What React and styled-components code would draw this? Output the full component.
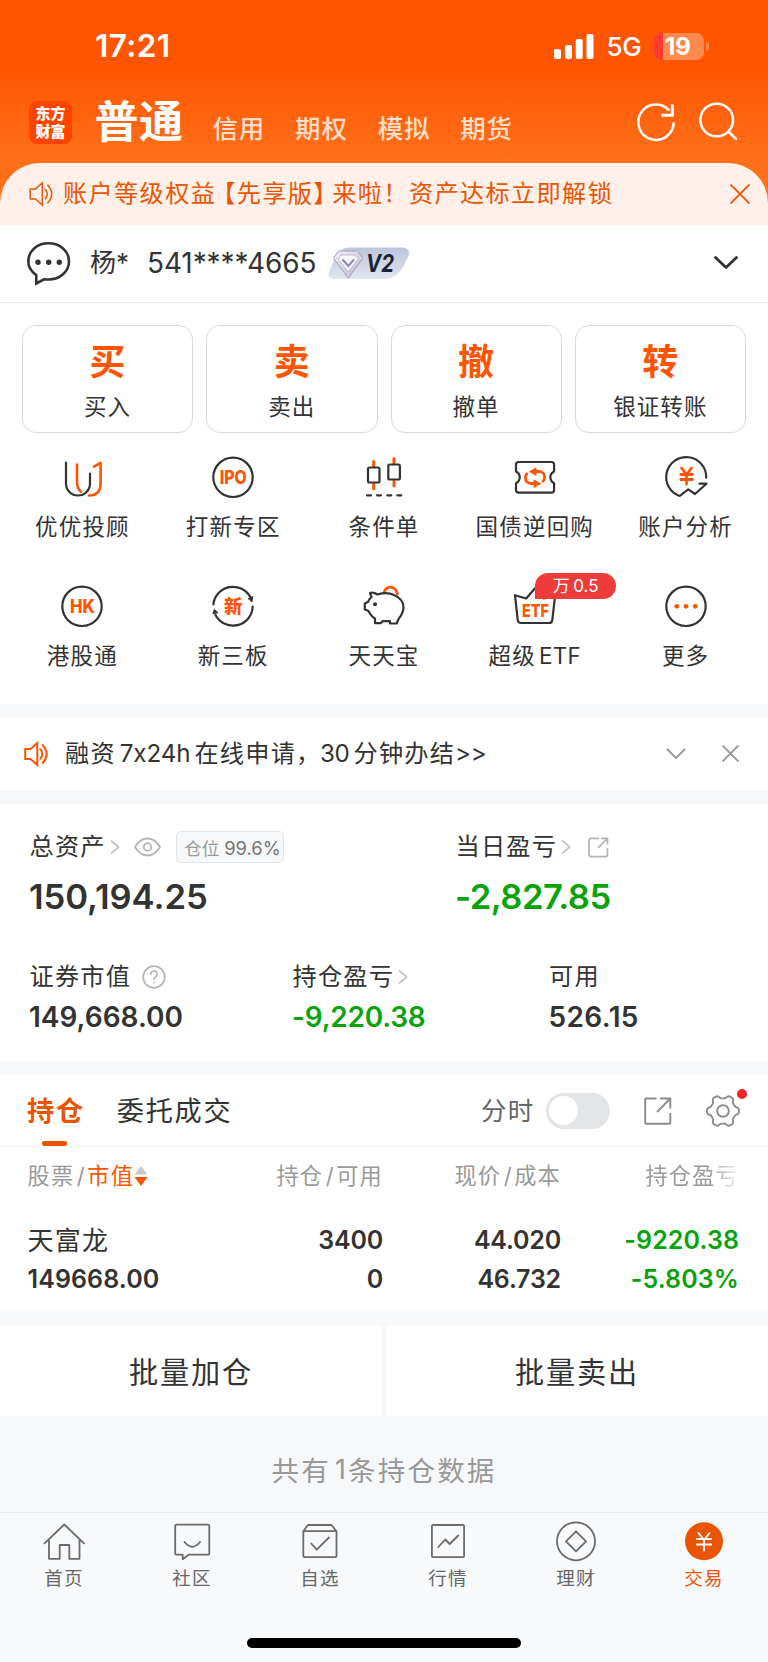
import React from "react";
import styled, { createGlobalStyle } from "styled-components";

const ORANGE = "#ff5500";
const DEEP = "#ea5504";
const INK = "#333";
const GREEN = "#0aa30a";
const FONT = 'Inter, "Noto Sans CJK SC", sans-serif';

const Global = createGlobalStyle`
  * { box-sizing: border-box; }
  body { margin: 0; background: #f7f8fa; font-family: ${FONT}; color: ${INK}; }
  svg { display: block; flex: none; }
`;

const Page = styled.div`
  width: 768px;
  height: 1662px;
  display: flex;
  flex-direction: column;
  overflow: hidden;
  white-space: nowrap;
  background: #f7f8fa;
`;

/* ---------- header ---------- */
const Hero = styled.header`
  flex: none;
  background: linear-gradient(#ff5500 0, #ff5500 66px, #ff7019 160px, #ff7019 100%);
`;
const StatusBar = styled.div`
  height: 92px;
  padding: 0 59px 0 95px;
  display: flex;
  align-items: center;
  color: #fff;
`;
const Clock = styled.div`
  flex: 1;
  font-size: 31.5px;
  font-weight: 600;
  line-height: 40px;
  letter-spacing: 0.4px;
`;
const Network = styled.div`
  margin: 2px 12px 0 13px;
  width: 35.5px;
  font-size: 26px;
  font-weight: 500;
  line-height: 30px;
  letter-spacing: -0.3px;
`;
const Battery = styled.div`
  width: 50px;
  height: 27px;
  border-radius: 8px;
  padding-left: 11px;
  font-size: 24px;
  line-height: 27px;
  font-weight: 700;
  background: linear-gradient(90deg, #ff3b30 9.5px, #ff8a4f 9.5px);
`;
const BatteryTip = styled.div`
  margin-left: 2px;
  width: 3px;
  height: 9px;
  border-radius: 0 4px 4px 0;
  background: #ff8a4f;
`;
const NavBar = styled.div`
  height: 71px;
  padding: 0 29px 0 29px;
  display: flex;
  align-items: flex-start;
`;
const Logo = styled.div`
  margin-top: 9px;
  width: 43px;
  height: 43px;
  border-radius: 8px;
  padding-top: 3.5px;
  background: #ff4400;
  color: #fff;
  font-size: 15px;
  font-weight: 900;
  line-height: 18px;
  text-align: center;
`;
const NavActive = styled.div`
  margin-left: 22.5px;
  width: 118px;
  font-size: 44px;
  font-weight: 700;
  line-height: 60px;
  letter-spacing: 0.6px;
  color: #fff;
`;
const NavItem = styled.div`
  width: 82.6px;
  font-size: 25.5px;
  font-weight: 500;
  line-height: 30px;
  padding-top: 21.5px;
  letter-spacing: 0.8px;
  color: #ffddcc;
`;
const NavIcons = styled.div`
  margin-left: auto;
  padding-top: 8px;
  display: flex;
  gap: 17.5px;
`;
const Promo = styled.div`
  height: 61.5px;
  padding: 0 18px 0 29px;
  display: flex;
  align-items: center;
  border-radius: 40px 40px 0 0;
  background: #fff0e9;
  color: ${DEEP};
`;
const PromoText = styled.div`
  flex: 1;
  margin-left: 9px;
  font-size: 24.2px;
  line-height: 30px;
  letter-spacing: 1.35px;
`;
const Bracket = styled.span`
  font-feature-settings: "halt";
  margin-left: ${(p) => (p.$open ? "7px" : "0")};
  margin-right: ${(p) => (p.$open ? "0" : "5.5px")};
`;

/* ---------- account ---------- */
const AccountRow = styled.div`
  flex: none;
  height: 78.5px;
  padding: 0 30px 0 26px;
  display: flex;
  align-items: center;
  background: #fff;
  border-bottom: 1.5px solid #eee;
`;
const AccountName = styled.div`
  margin-left: 18px;
  width: 57px;
  font-size: 26px;
  line-height: 32px;
`;
const AccountNumber = styled.div`
  width: 180.5px;
  font-size: 28px;
  line-height: 32px;
  letter-spacing: -0.1px;
`;
const LevelBadge = styled.div`
  margin-right: auto;
`;

/* ---------- shortcuts ---------- */
const Shortcuts = styled.section`
  flex: none;
  height: 400.5px;
  padding-top: 21.5px;
  background: #fff;
`;
const CardRow = styled.div`
  padding: 0 22px;
  display: grid;
  grid-template-columns: repeat(4, 1fr);
  gap: 13px;
`;
const ActionCard = styled.div`
  height: 108px;
  display: flex;
  flex-direction: column;
  align-items: center;
  border: 1px solid #dadada;
  border-radius: 14px;
`;
const ActionGlyph = styled.div`
  margin-top: 13.5px;
  font-size: 36px;
  line-height: 46px;
  font-weight: 700;
  color: ${ORANGE};
`;
const ActionLabel = styled.div`
  margin-top: 5.5px;
  font-size: 22.5px;
  line-height: 32px;
  letter-spacing: 1.1px;
`;
const ToolGrid = styled.div`
  padding: 20.5px 7px 0;
  display: grid;
  grid-template-columns: repeat(5, 1fr);
  grid-auto-rows: 129.3px;
`;
const Tool = styled.div`
  position: relative;
  display: flex;
  flex-direction: column;
  align-items: center;
`;
const ToolLabel = styled.div`
  margin-top: 10px;
  font-size: 22.5px;
  line-height: 32px;
  letter-spacing: 1.2px;
`;
const RateTag = styled.div`
  position: absolute;
  left: 76px;
  top: -9.5px;
  width: 80.5px;
  height: 26.5px;
  border-radius: 14px 14px 14px 0;
  background: #ee3b3b;
  color: #fff;
  font-size: 17px;
  line-height: 27.5px;
  letter-spacing: 0.4px;
  text-align: center;
`;
const Latin = styled.span`
  margin-left: ${(p) => p.$l || 0}px;
  margin-right: ${(p) => p.$r || 0}px;
  letter-spacing: ${(p) => p.$ls || 0}px;
`;

/* ---------- financing notice ---------- */
const Notice = styled.div`
  flex: none;
  margin-top: 14px;
  height: 72.5px;
  padding: 0 29.5px 0 23.5px;
  display: flex;
  align-items: center;
  gap: 36px;
  background: #fff;
`;
const NoticeText = styled.div`
  flex: 1;
  margin-left: -19.5px;
  font-size: 24.2px;
  line-height: 32px;
  letter-spacing: 1.2px;
`;

/* ---------- assets ---------- */
const Assets = styled.section`
  flex: none;
  margin-top: 14px;
  height: 257px;
  padding: 27px 30px 0 29.5px;
  background: #fff;
`;
const TotalsRow = styled.div`
  display: grid;
  grid-template-columns: 426px 1fr;
  height: 129.5px;
`;
const DetailRow = styled.div`
  display: grid;
  grid-template-columns: 263px 256.5px 1fr;
`;
const MetricLabel = styled.div`
  height: 32px;
  display: flex;
  align-items: center;
  font-size: 24.2px;
  line-height: 32px;
  letter-spacing: 1.2px;
`;
const Figure = styled.div`
  margin-left: -0.5px;
  margin-top: ${(p) => (p.$large ? 13 : 4)}px;
  font-size: ${(p) => (p.$large ? 34.6 : 28)}px;
  line-height: 40px;
  font-weight: 600;
  letter-spacing: ${(p) => p.$ls || 0}px;
  color: ${(p) => (p.$loss ? GREEN : INK)};
`;
const PositionTag = styled.div`
  margin-left: 15.5px;
  width: 108px;
  height: 32px;
  padding-left: 7px;
  border: 1px solid #e3e4e6;
  border-radius: 5px;
  background: #f7f8fa;
  font-size: 17.5px;
  line-height: 32px;
  letter-spacing: 0;
  color: #999;
`;
const TagValue = styled.span`
  margin-left: 5px;
  font-size: 18.4px;
  color: #777;
`;
const IconSlot = styled.span`
  margin-left: ${(p) => p.$gap}px;
  line-height: 0;
`;

/* ---------- holdings ---------- */
const Holdings = styled.section`
  flex: none;
  margin-top: 14px;
  height: 236px;
  background: #fff;
`;
const TabRow = styled.div`
  height: 72px;
  padding: 0 28px 0 27px;
  display: flex;
  align-items: center;
  border-bottom: 1px solid #f0f1f3;
`;
const Tab = styled.div`
  position: relative;
  height: 71px;
  line-height: 73px;
  margin-right: 32px;
  font-size: 27.2px;
  letter-spacing: 1.7px;
  font-weight: ${(p) => (p.$active ? 600 : 400)};
  color: ${(p) => (p.$active ? DEEP : INK)};
`;
const TabMark = styled.span`
  position: absolute;
  left: 15px;
  bottom: 0;
  width: 25px;
  height: 5px;
  border-radius: 2px;
  background: ${DEEP};
`;
const SwitchLabel = styled.div`
  margin-left: auto;
  font-size: 25.5px;
  line-height: 33px;
  letter-spacing: 1.2px;
  color: #666;
`;
const Toggle = styled.div`
  margin-left: 11px;
  width: 64.5px;
  height: 36px;
  padding: 3.5px;
  border-radius: 18px;
  background: #e3e4e6;
`;
const Knob = styled.div`
  width: 29px;
  height: 29px;
  border-radius: 50%;
  background: #fff;
`;
const GearWrap = styled.div`
  position: relative;
  margin-left: 34px;
`;
const RedDot = styled.div`
  position: absolute;
  right: -7px;
  top: -5px;
  width: 10.5px;
  height: 10.5px;
  border-radius: 50%;
  background: #f62424;
`;
const TableRow = styled.div`
  padding: 0 29px 0 27.5px;
  display: grid;
  grid-template-columns: 160px 195.5px 178px 1fr;
`;
const HeadRow = styled(TableRow)`
  margin-top: 12px;
  height: 33px;
  font-size: 22.2px;
  line-height: 32px;
  letter-spacing: 1.2px;
  color: #999;
`;
const HeadCell = styled.div`
  display: flex;
  align-items: center;
  justify-content: ${(p) => (p.$right ? "flex-end" : "flex-start")};
  mask-image: ${(p) =>
    p.$fade ? "linear-gradient(270deg, rgba(0,0,0,.1), #000 30px)" : "none"};
`;
const SortKey = styled.span`
  color: ${ORANGE};
`;
const BodyRow = styled(TableRow)`
  margin-top: 28.5px;
`;
const BodyCell = styled.div`
  text-align: ${(p) => (p.$right ? "right" : "left")};
  font-size: 25px;
  line-height: 39px;
  font-weight: 600;
  letter-spacing: ${(p) => (p.$right && !p.$loss ? -0.2 : 0.1)}px;
  color: ${(p) => (p.$loss ? GREEN : INK)};
`;
const StockName = styled.div`
  font-size: 26px;
  font-weight: 400;
  letter-spacing: 1.2px;
`;

/* ---------- batch actions & footer ---------- */
const BatchRow = styled.div`
  flex: none;
  margin-top: 15px;
  height: 90px;
  display: grid;
  grid-template-columns: 1fr 1fr;
  gap: 4px;
`;
const BatchButton = styled.div`
  height: 90px;
  padding-top: 2.5px;
  background: #fff;
  text-align: center;
  font-size: 29.2px;
  line-height: 87.5px;
  letter-spacing: 1.8px;
`;
const Summary = styled.div`
  flex: 1;
  display: flex;
  align-items: center;
  justify-content: center;
  padding-top: 10px;
  font-size: 27.5px;
  letter-spacing: 2.2px;
  color: #999;
`;
const TabBar = styled.nav`
  flex: none;
  height: 150px;
  border-top: 1.5px solid #ebebed;
  background: #f8f9fb;
  display: grid;
  grid-template-columns: repeat(6, 1fr);
  grid-template-rows: 125px 1fr;
`;
const TabItem = styled.div`
  padding-top: 6px;
  display: flex;
  flex-direction: column;
  align-items: center;
  font-size: 18.5px;
  line-height: 26px;
  letter-spacing: 1.2px;
  color: ${(p) => (p.$active ? DEEP : "#666")};
  svg { margin-bottom: 2px; }
`;
const HomeIndicator = styled.div`
  grid-column: 1 / -1;
  justify-self: center;
  width: 274px;
  height: 9.5px;
  border-radius: 5px;
  background: #000;
`;

/* ---------- icons ---------- */
const Svg = ({ w, h = w, sw = 2, c = INK, children }) => (
  <svg width={w} height={h} viewBox={`0 0 ${w} ${h}`} fill="none" stroke={c} strokeWidth={sw} strokeLinecap="round" strokeLinejoin="round">
    {children}
  </svg>
);
const Word = ({ x = 24.3, y, size, len, children }) => (
  <text x={x} y={y} fontSize={size} fontWeight="800" fontFamily={FONT} fill={ORANGE} stroke="none" textAnchor="middle" textLength={len} lengthAdjust="spacingAndGlyphs">
    {children}
  </text>
);
const Speaker = ({ c, sw }) => (
  <Svg w={25} h={26} c={c} sw={sw}>
    <path strokeLinecap="butt" strokeLinejoin="miter" d="M1.2 8H6.5L13.3 2V24L6.5 18H1.2Z" />
    <path d="M16.3 8.2q4 4.8 0 9.6M18.7 4.2q8 8.8 0 17.8" />
  </Svg>
);
const Cross = ({ s, c, sw }) => (
  <Svg w={s} c={c} sw={sw}>
    <path strokeLinecap="butt" d={`M.5 .5L${s - 0.5} ${s - 0.5}M${s - 0.5} .5L.5 ${s - 0.5}`} />
  </Svg>
);
const Right = () => (
  <Svg w={10} h={16} c="#c4c4c4" sw={1.7}><path strokeLinecap="butt" d="M1 1.5L8.6 8L1 14.5" /></Svg>
);

const tools = [
  ["优优投顾", <><path d="M8 9.5V30.5a12 12 0 0 0 24 0V20.5" /><path stroke={ORANGE} strokeWidth="2.6" d="M19 11.5V29c0 5 1.5 7.5 4 9.7M36 13.7L42.6 9.8V30c0 8-4 12.5-11.5 12.5" /></>],
  ["打新专区", <><circle cx="24" cy="24.3" r="19.7" /><Word y={30.8} size={18.5} len={27}>IPO</Word></>],
  ["条件单", <><path stroke={ORANGE} strokeWidth="3" d="M13.7 8.5V13M13.7 31V35.7M34 5.5V10M34 28V32.7" /><rect x="8" y="14.5" width="11.5" height="15" rx="1.5" /><rect x="28.3" y="11.5" width="11.6" height="15" rx="1.5" /><path d="M7 42.3h4M17 42.3h4M27.3 42.3h4M37.3 42.3h4" /></>],
  ["国债逆回购", <><path d="M7.5 9H40.5a2.6 2.6 0 0 1 2.6 2.6V18.5c-5 2.5-5 9 0 11.8V37a2.6 2.6 0 0 1-2.6 2.6H7.5A2.6 2.6 0 0 1 5 37V30.3c5-2.8 5-9.3 0-11.8V11.6A2.6 2.6 0 0 1 7.5 9Z" /><path stroke={ORANGE} strokeWidth="2.8" d="M24 18.5h4c3.5 0 5.6 2.6 5.6 5.5 0 2-.6 3.3-1.6 4.3M24 30.5h-4c-3.5 0-5.6-2.6-5.6-5.5 0-2 .6-3.5 1.5-4.2" /><path fill={ORANGE} stroke={ORANGE} strokeWidth="1" d="M18.8 18.5L25 15V22ZM29.2 30.5L23 27V34Z" /></>],
  ["账户分析", <><path d="M44.2 24.7A20 20 0 1 0 17.7 43L26.3 36.3L33 41L44.5 30.7H37.5" /><path stroke={ORANGE} strokeWidth="2.8" d="M19.5 15L24.5 21.5L29.5 15M24.5 21.5V31M18.8 21.5H30.5M18.8 26.5H30.5" /></>],
  ["港股通", <><circle cx="24" cy="24.3" r="19.7" /><Word x={24.5} y={30.8} size={18.5} len={25}>HK</Word></>],
  ["新三板", <><path d="M4.4 22.3A19.7 19.7 0 0 1 41.5 15.5M43.7 24.5A19.7 19.7 0 0 1 6.5 33" /><path fill={INK} strokeWidth="1" d="M39.5 16.5L43.8 14.5L43 19.5ZM4 31.5L5.3 27.5L8.8 30.5Z" /><Word y={31} size={18.5}>新</Word></>],
  ["天天宝", <><path stroke={ORANGE} strokeWidth="2.8" d="M24 10.5C26.5 3.2 35 3.2 37.5 12" /><path fill="#fff" d="M10 11C13 10 15.5 11.2 17.5 12.5C23 10.8 30 11 34 13C40 15.5 43.5 20 43.5 25.5C43.5 31 40.5 34.5 38.3 37.5L36.7 41.5H30V39.2H22.5L21 41.2H15V36.5C12 35 10.5 33 8.5 29L4.8 27.5V21.5L8 20C8.6 17.8 9.8 16.5 11.5 15Z" /><circle cx="15" cy="22.3" r="2" fill={INK} stroke="none" /></>],
  ["超级", <><path d="M4 13.2L15.2 16.5L23.8 6.5L32.8 16.5L44.2 13.2L41.3 38Q41 41 38 41H10Q7 41 6.7 38Z" /><Word x={24.5} y={34.8} size={18} len={27}>ETF</Word></>],
  ["更多", <><circle cx="24" cy="24.3" r="19.7" /><g fill={ORANGE} stroke="none"><circle cx="14.8" cy="24.3" r="2.4" /><circle cx="24" cy="24.3" r="2.4" /><circle cx="33.3" cy="24.3" r="2.4" /></g></>],
];

const tabs = [
  ["首页", <path d="M2.5 24.3L22.3 5.5L42 24.3M7 21V39.8H17.7V26H27.3V39.8H37.5V21" />],
  ["社区", <><path d="M6.5 5.7H38a1.3 1.3 0 0 1 1.3 1.3V34.4a1.3 1.3 0 0 1-1.3 1.3H18.7L12.7 40.3V35.7H6.5a1.3 1.3 0 0 1-1.3-1.3V7a1.3 1.3 0 0 1 1.3-1.3Z" /><path d="M14.5 23q7.8 9.5 15.5 0" /></>],
  ["自选", <path d="M5.3 12.2L10 6H33.5L38.5 12.2V36.5Q38.5 38.2 37 38.2H7Q5.3 38.2 5.3 36.5ZM5.3 12.2H38.5M13.3 24.5L18.7 30.7L31 18.5" />],
  ["行情", <><rect x="5.9" y="6" width="32.2" height="32.2" rx="1.3" /><path d="M12.3 28L19.3 20.5L23.7 25L32.3 16.5" /></>],
  ["理财", <><circle cx="22" cy="22.3" r="19" /><path d="M22 12.3L32 22.3L22 32.3L12 22.3Z" /></>],
  ["交易", <><circle cx="22" cy="22.3" r="19" fill={DEEP} stroke="none" /><path stroke="#fff" d="M16.5 14L22 21L27.5 14M22 21V31.5M14.8 20H29.2M14.8 25.5H29.2" /></>],
];

const cards = [["买", "买入"], ["卖", "卖出"], ["撤", "撤单"], ["转", "银证转账"]];

const gearPoints = () => {
  const pts = [];
  for (let i = 0; i <= 120; i += 1) {
    const a = (i / 120) * Math.PI * 2;
    const r = 14.3 - 1.7 * Math.tanh(2 * Math.cos(6 * a)) / Math.tanh(2);
    pts.push(`${(17 + r * Math.sin(a + Math.PI)).toFixed(2)} ${(17 + r * Math.cos(a + Math.PI)).toFixed(2)}`);
  }
  return `M${pts.join("L")}Z`;
};

export default function App() {
  return (
    <Page>
      <Global />
      <Hero>
        <StatusBar>
          <Clock>17:21</Clock>
          <svg width="40" height="25" fill="#fff">
            <rect x="0" y="15" width="7" height="10" rx="2" />
            <rect x="11" y="11" width="7" height="14" rx="2" />
            <rect x="21.7" y="5" width="7" height="20" rx="2" />
            <rect x="32.5" y="0" width="7" height="25" rx="2" />
          </svg>
          <Network>5G</Network>
          <Battery>19</Battery>
          <BatteryTip />
        </StatusBar>
        <NavBar>
          <Logo><div>东方</div><div>财富</div></Logo>
          <NavActive>普通</NavActive>
          {["信用", "期权", "模拟", "期货"].map((t) => <NavItem key={t}>{t}</NavItem>)}
          <NavIcons>
            <Svg w={44} c="#fff" sw={2.5}>
              <path strokeLinecap="butt" d="M39.7 22.3A17.7 17.7 0 1 1 35.3 10.5" />
              <path strokeLinecap="butt" strokeLinejoin="miter" strokeWidth="3" d="M38.3 4.5V15.3H27.5" />
            </Svg>
            <Svg w={44} c="#fff" sw={2.5}><circle cx="21.7" cy="20" r="16.3" /><path d="M33.3 31.5L41 39" /></Svg>
          </NavIcons>
        </NavBar>
        <Promo>
          <Speaker c={DEEP} sw={1.5} />
          <PromoText>
            账户等级权益<Bracket $open>【</Bracket>先享版<Bracket>】</Bracket>来啦！资产达标立即解锁
          </PromoText>
          <Cross s={20} c={DEEP} sw={1.8} />
        </Promo>
      </Hero>

      <AccountRow>
        <Svg w={46} h={46} sw={2.6}>
          <path strokeLinejoin="miter" d="M10.3 43.5V35.2C5 31.5 2.3 26.5 2.3 21.3C2.3 11 11 3.3 22.5 3.3S43 11 43 21.3S34 39.5 22.5 39.5Q20.5 39.5 18.5 39.2Z" />
          <g fill={INK} stroke="none"><circle cx="12" cy="22.3" r="2.7" /><circle cx="22.7" cy="22.3" r="2.7" /><circle cx="33.3" cy="22.3" r="2.7" /></g>
        </Svg>
        <AccountName>杨*</AccountName>
        <AccountNumber>541****4665</AccountNumber>
        <LevelBadge>
          <svg width="82" height="33" viewBox="0 0 82 33">
            <defs>
              <linearGradient id="plate" x1="0" y1="0" x2="0" y2="1"><stop offset="0" stopColor="#bcc5db" /><stop offset="1" stopColor="#e1e5ef" /></linearGradient>
              <linearGradient id="gem" x1="0" y1="0" x2="1" y2="1"><stop offset="0" stopColor="#f6f4fb" /><stop offset="1" stopColor="#b9b2d3" /></linearGradient>
            </defs>
            <path fill="url(#plate)" d="M21 .5H74Q83 1 80.5 9L75 20Q69 32 56 32H6Q-1 31.5 1 25L7 11Q11 1 21 .5Z" />
            <path fill="url(#gem)" stroke="#9f99b8" strokeWidth="1" d="M10.5 4H29L35 11L20.3 31L5.5 11Z" />
            <path fill="#fff" fillOpacity=".75" stroke="#b4aecb" strokeWidth=".8" d="M13 8H27L30.5 12L20.3 25L10 12Z" />
            <path fill="none" stroke="#9089b3" strokeWidth="2" d="M14.5 12.5L20.3 19L26 12.5" />
            <path fill="none" stroke="#dcd8ea" strokeWidth="1" d="M5.5 11L10.5 12M35 11L30.5 12M20.3 25V30M10.5 4L13 8M29 4L27 8" />
            <text x="38" y="24.8" fontFamily={FONT} fontStyle="italic" fontWeight="700" fontSize="24" fill="#1c2333" textLength="28" lengthAdjust="spacingAndGlyphs">V2</text>
          </svg>
        </LevelBadge>
        <Svg w={24} h={14} sw={2.8}><path d="M1.5 1.5L12 11.5L22.5 1.5" /></Svg>
      </AccountRow>

      <Shortcuts>
        <CardRow>
          {cards.map(([g, l]) => (
            <ActionCard key={l}><ActionGlyph>{g}</ActionGlyph><ActionLabel>{l}</ActionLabel></ActionCard>
          ))}
        </CardRow>
        <ToolGrid>
          {tools.map(([label, art]) => (
            <Tool key={label}>
              <Svg w={48} sw={2.2}>{art}</Svg>
              <ToolLabel>{label}{label === "超级" && <Latin $l={3} $ls={0.3}>ETF</Latin>}</ToolLabel>
              {label === "超级" && <RateTag>万<Latin $l={3}>0.5</Latin></RateTag>}
            </Tool>
          ))}
        </ToolGrid>
      </Shortcuts>

      <Notice>
        <Speaker c={ORANGE} sw={2} />
        <NoticeText>
          融资<Latin $l={4} $r={4} $ls={-0.1}>7x24h</Latin>在线申请，<Latin $l={-1.5} $r={4} $ls={-0.3}>30</Latin>分钟办结<Latin $ls={-0.3}>&gt;&gt;</Latin>
        </NoticeText>
        <Svg w={20} h={12} c="#999" sw={1.9}><path strokeLinecap="butt" d="M1 1L10 10L19 1" /></Svg>
        <Cross s={17} c="#999" sw={1.9} />
      </Notice>

      <Assets>
        <TotalsRow>
          <div>
            <MetricLabel>
              总资产
              <IconSlot $gap={4}><Right /></IconSlot>
              <IconSlot $gap={14}>
                <Svg w={27} h={20} c="#b5b5b5" sw={1.8}><path d="M1 10Q6 1.5 13.5 1.5T26 10Q21 18.5 13.5 18.5T1 10Z" /><circle cx="13.5" cy="10" r="3.8" /></Svg>
              </IconSlot>
              <PositionTag>仓位<TagValue>99.6%</TagValue></PositionTag>
            </MetricLabel>
            <Figure $large $ls={-0.05}>150,194.25</Figure>
          </div>
          <div>
            <MetricLabel>
              当日盈亏
              <IconSlot $gap={3.5}><Right /></IconSlot>
              <IconSlot $gap={17.5}>
                <Svg w={21} c="#b5b5b5" sw={1.8}><path strokeLinecap="butt" d="M11 1.3H3.5Q1 1.3 1 3.8V17.2Q1 19.7 3.5 19.7H17Q19.5 19.7 19.5 17.2V11M13 1.3H19.5V7.5M19.5 1.3L10 10.8" /></Svg>
              </IconSlot>
            </MetricLabel>
            <Figure $large $loss $ls={-0.5}>-2,827.85</Figure>
          </div>
        </TotalsRow>
        <DetailRow>
          <div>
            <MetricLabel>
              证券市值
              <IconSlot $gap={10.5}>
                <Svg w={24} c="#b5b5b5" sw={1.7}><circle cx="12" cy="12" r="10.8" /><path d="M8.8 9.3A3.2 3.2 0 1 1 13.5 12C12.3 12.7 12 13.2 12 14.5M12 17.5V17.7" /></Svg>
              </IconSlot>
            </MetricLabel>
            <Figure>149,668.00</Figure>
          </div>
          <div>
            <MetricLabel>持仓盈亏<IconSlot $gap={3.5}><Right /></IconSlot></MetricLabel>
            <Figure $loss $ls={-0.25}>-9,220.38</Figure>
          </div>
          <div>
            <MetricLabel>可用</MetricLabel>
            <Figure $ls={0.4}>526.15</Figure>
          </div>
        </DetailRow>
      </Assets>

      <Holdings>
        <TabRow>
          <Tab $active>持仓<TabMark /></Tab>
          <Tab>委托成交</Tab>
          <SwitchLabel>分时</SwitchLabel>
          <Toggle><Knob /></Toggle>
          <IconSlot $gap={34}>
            <Svg w={28} c="#8c8c8c" sw={1.9}><path strokeLinecap="butt" d="M12.5 1.5H2Q1.2 1.5 1.2 2.3V26Q1.2 26.8 2 26.8H25.5Q26.3 26.8 26.3 26V16M16 1.5H26.3V11.5M26.3 1.5L13 15" /></Svg>
          </IconSlot>
          <GearWrap>
            <Svg w={34} c="#8c8c8c" sw={1.9}><path d={gearPoints()} /><circle cx="17" cy="17" r="5.8" /></Svg>
            <RedDot />
          </GearWrap>
        </TabRow>
        <HeadRow>
          <HeadCell>
            股票<Latin $l={2.5} $r={2.5}>/</Latin><SortKey>市值</SortKey>
            <svg width="14" height="20"><path fill="#c9c9c9" d="M7 0L13.5 8.5H.5Z" /><path fill={ORANGE} d="M7 20L13.5 11H.5Z" /></svg>
          </HeadCell>
          <HeadCell $right>持仓<Latin $l={2.5} $r={2.5}>/</Latin>可用</HeadCell>
          <HeadCell $right>现价<Latin $l={2.5} $r={2.5}>/</Latin>成本</HeadCell>
          <HeadCell $right $fade>持仓盈亏</HeadCell>
        </HeadRow>
        <BodyRow>
          <BodyCell><StockName>天富龙</StockName>149668.00</BodyCell>
          <BodyCell $right>3400<br />0</BodyCell>
          <BodyCell $right>44.020<br />46.732</BodyCell>
          <BodyCell $right $loss>-9220.38<br />-5.803%</BodyCell>
        </BodyRow>
      </Holdings>

      <BatchRow>
        <BatchButton>批量加仓</BatchButton>
        <BatchButton>批量卖出</BatchButton>
      </BatchRow>
      <Summary>共有<Latin $l={4} $r={2}>1</Latin>条持仓数据</Summary>

      <TabBar>
        {tabs.map(([label, art]) => (
          <TabItem key={label} $active={label === "交易"}>
            <Svg w={44} c="#6b6b6b" sw={1.8}>{art}</Svg>
            {label}
          </TabItem>
        ))}
        <HomeIndicator />
      </TabBar>
    </Page>
  );
}
